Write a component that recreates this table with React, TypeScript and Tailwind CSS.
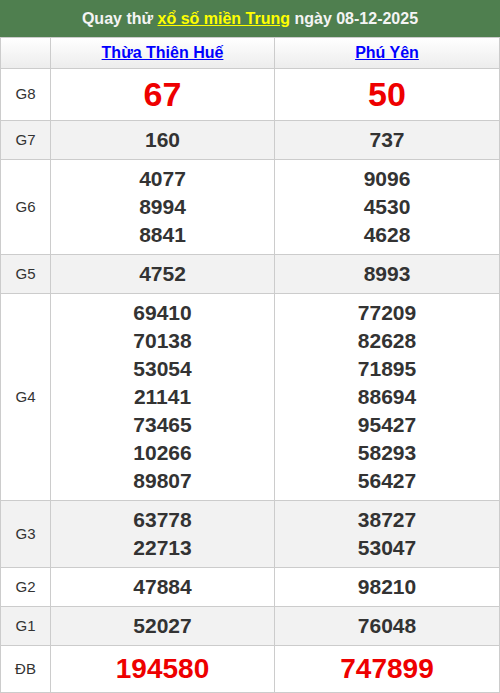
const rows: { label: string; a: string[]; b: string[]; kind?: "big" | "db" }[] = [
  { label: "G8", a: ["67"], b: ["50"], kind: "big" },
  { label: "G7", a: ["160"], b: ["737"] },
  { label: "G6", a: ["4077", "8994", "8841"], b: ["9096", "4530", "4628"] },
  { label: "G5", a: ["4752"], b: ["8993"] },
  {
    label: "G4",
    a: ["69410", "70138", "53054", "21141", "73465", "10266", "89807"],
    b: ["77209", "82628", "71895", "88694", "95427", "58293", "56427"],
  },
  { label: "G3", a: ["63778", "22713"], b: ["38727", "53047"] },
  { label: "G2", a: ["47884"], b: ["98210"] },
  { label: "G1", a: ["52027"], b: ["76048"] },
  { label: "ĐB", a: ["194580"], b: ["747899"], kind: "db" },
];

function Nums({ items, kind }: { items: string[]; kind?: "big" | "db" }) {
  if (kind === "big")
    return <div className="text-[34px] leading-[41px] font-bold text-[#e00]">{items[0]}</div>;
  if (kind === "db")
    return <div className="text-[28px] leading-[36px] font-bold text-[#e00]">{items[0]}</div>;
  return (
    <>
      {items.map((n) => (
        <div key={n} className="text-[21px] leading-[28px] font-bold text-[#333]">
          {n}
        </div>
      ))}
    </>
  );
}

export default function App() {
  return (
    <div className="w-[500px] font-['Liberation_Sans',Arial,sans-serif]">
      <div className="h-[37px] bg-[#4f7f4f] flex items-center justify-center text-[16px] font-bold text-[#f4f4f4]">
        Quay thử&nbsp;<a className="text-[#ffff00] underline">xổ số miền Trung</a>&nbsp;ngày 08-12-2025
      </div>
      <table className="w-[500px] border-collapse table-fixed text-center">
        <colgroup>
          <col className="w-[50px]" />
          <col className="w-[224px]" />
          <col />
        </colgroup>
        <thead>
          <tr className="h-[31px] bg-gradient-to-b from-[#ffffff] to-[#ececec]">
            <th className="border border-[#cccccc]" />
            <th className="border border-[#cccccc] text-[16px] font-bold text-[#0000ff] underline">Thừa Thiên Huế</th>
            <th className="border border-[#cccccc] text-[16px] font-bold text-[#0000ff] underline">Phú Yên</th>
          </tr>
        </thead>
        <tbody>
          {rows.map((r, i) => (
            <tr key={r.label} className={i % 2 === 1 ? "bg-[#f2f2f2]" : "bg-white"}>
              <td className="border border-[#cccccc] text-[15px] text-[#333] py-[5px]">{r.label}</td>
              <td className="border border-[#cccccc] py-[5px]">
                <Nums items={r.a} kind={r.kind} />
              </td>
              <td className="border border-[#cccccc] py-[5px]">
                <Nums items={r.b} kind={r.kind} />
              </td>
            </tr>
          ))}
        </tbody>
      </table>
    </div>
  );
}
